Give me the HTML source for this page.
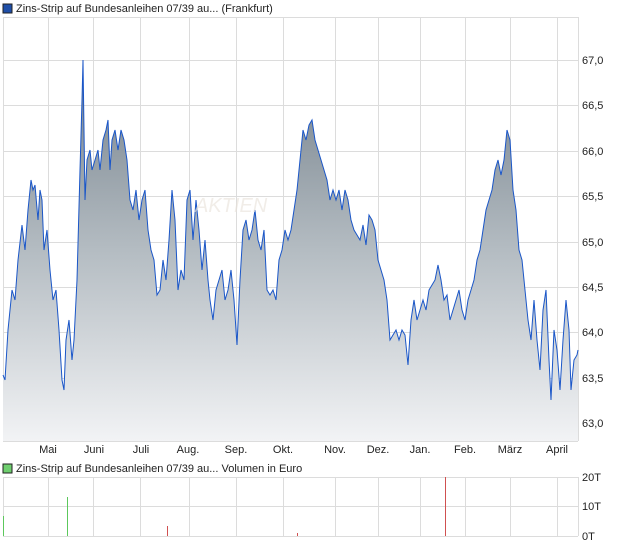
<!DOCTYPE html>
<html><head><meta charset="utf-8"><style>
html,body{margin:0;padding:0;background:#fff;}
body{width:620px;height:546px;overflow:hidden;font-family:"Liberation Sans",sans-serif;}
</style></head><body>
<svg width="620" height="546" viewBox="0 0 620 546" xmlns="http://www.w3.org/2000/svg" font-family="Liberation Sans, sans-serif" font-size="11">
<defs>
<linearGradient id="g" x1="0" y1="60" x2="0" y2="441" gradientUnits="userSpaceOnUse">
<stop offset="0" stop-color="#74808a"/><stop offset="0.5" stop-color="#b4bcc2"/><stop offset="1" stop-color="#f2f3f5"/>
</linearGradient>
</defs>
<rect x="3" y="4" width="9" height="9" fill="#1f4fa8" stroke="#222" stroke-width="1"/>
<text x="16" y="12" fill="#222">Zins-Strip auf Bundesanleihen 07/39 au... (Frankfurt)</text>
<g stroke="#dcdcdc" stroke-width="1">
<line x1="3" y1="17.5" x2="578" y2="17.5"/>
<line x1="3" y1="60.5" x2="578" y2="60.5"/><line x1="3" y1="105.5" x2="578" y2="105.5"/><line x1="3" y1="151.5" x2="578" y2="151.5"/><line x1="3" y1="196.5" x2="578" y2="196.5"/><line x1="3" y1="242.5" x2="578" y2="242.5"/><line x1="3" y1="287.5" x2="578" y2="287.5"/><line x1="3" y1="332.5" x2="578" y2="332.5"/><line x1="3" y1="378.5" x2="578" y2="378.5"/><line x1="3" y1="423.5" x2="578" y2="423.5"/>
<line x1="3.5" y1="17" x2="3.5" y2="441"/><line x1="48.5" y1="17" x2="48.5" y2="441"/><line x1="93.5" y1="17" x2="93.5" y2="441"/><line x1="140.5" y1="17" x2="140.5" y2="441"/><line x1="189.5" y1="17" x2="189.5" y2="441"/><line x1="236.5" y1="17" x2="236.5" y2="441"/><line x1="283.5" y1="17" x2="283.5" y2="441"/><line x1="335.5" y1="17" x2="335.5" y2="441"/><line x1="378.5" y1="17" x2="378.5" y2="441"/><line x1="420.5" y1="17" x2="420.5" y2="441"/><line x1="465.5" y1="17" x2="465.5" y2="441"/><line x1="510.5" y1="17" x2="510.5" y2="441"/><line x1="557.5" y1="17" x2="557.5" y2="441"/>
<line x1="578.5" y1="17" x2="578.5" y2="441"/><line x1="3" y1="441.5" x2="578" y2="441.5"/>
</g>
<polygon fill="url(#g)" points="3,441 3,375 5,380 8,330 12,290 15,300 18,260 22,225 25,250 28,210 31,180 33,190 35,185 38,220 40,190 42,200 44,250 47,230 50,270 53,300 56,290 59,330 62,380 64,390 66,340 69,320 72,360 74,340 77,280 80,170 82,100 83,60 84,130 85,200 87,160 90,150 92,170 95,160 98,150 100,170 103,140 106,130 108,120 110,170 112,140 115,130 118,150 121,130 124,140 127,160 130,200 133,210 136,190 139,220 142,200 145,190 148,230 151,250 154,260 157,295 160,290 163,260 166,280 169,240 172,190 175,220 178,290 181,270 184,280 187,200 190,190 193,240 196,200 199,230 202,270 205,240 208,280 210,300 213,320 216,290 219,280 222,270 225,300 228,290 231,270 234,300 237,345 240,280 243,230 246,220 249,240 252,230 255,210 258,240 261,250 264,230 267,290 270,295 273,290 276,300 279,260 282,250 285,230 288,240 291,230 294,210 297,190 300,160 303,130 306,140 309,125 312,120 315,140 318,150 321,160 324,170 327,180 330,200 333,190 336,200 339,190 342,210 345,190 348,200 351,220 354,230 357,235 360,240 363,225 366,245 369,215 372,220 375,230 378,260 381,270 384,280 387,300 390,340 393,335 396,330 399,340 402,330 405,335 408,365 411,320 414,300 417,320 420,310 423,300 426,310 429,290 432,285 435,280 438,265 441,280 444,300 447,295 450,320 453,310 456,300 459,290 462,310 465,320 468,300 471,290 474,280 477,260 480,250 483,230 486,210 489,200 492,190 495,170 498,160 501,175 504,160 507,130 510,140 513,190 516,210 519,250 522,260 525,290 528,320 531,340 534,300 537,340 540,370 543,310 546,290 549,360 551,400 554,330 557,350 560,390 563,340 566,300 569,330 571,390 574,360 577,355 578,350 578,441"/>
<polyline fill="none" stroke="#1a56c8" stroke-width="1" points="3,375 5,380 8,330 12,290 15,300 18,260 22,225 25,250 28,210 31,180 33,190 35,185 38,220 40,190 42,200 44,250 47,230 50,270 53,300 56,290 59,330 62,380 64,390 66,340 69,320 72,360 74,340 77,280 80,170 82,100 83,60 84,130 85,200 87,160 90,150 92,170 95,160 98,150 100,170 103,140 106,130 108,120 110,170 112,140 115,130 118,150 121,130 124,140 127,160 130,200 133,210 136,190 139,220 142,200 145,190 148,230 151,250 154,260 157,295 160,290 163,260 166,280 169,240 172,190 175,220 178,290 181,270 184,280 187,200 190,190 193,240 196,200 199,230 202,270 205,240 208,280 210,300 213,320 216,290 219,280 222,270 225,300 228,290 231,270 234,300 237,345 240,280 243,230 246,220 249,240 252,230 255,210 258,240 261,250 264,230 267,290 270,295 273,290 276,300 279,260 282,250 285,230 288,240 291,230 294,210 297,190 300,160 303,130 306,140 309,125 312,120 315,140 318,150 321,160 324,170 327,180 330,200 333,190 336,200 339,190 342,210 345,190 348,200 351,220 354,230 357,235 360,240 363,225 366,245 369,215 372,220 375,230 378,260 381,270 384,280 387,300 390,340 393,335 396,330 399,340 402,330 405,335 408,365 411,320 414,300 417,320 420,310 423,300 426,310 429,290 432,285 435,280 438,265 441,280 444,300 447,295 450,320 453,310 456,300 459,290 462,310 465,320 468,300 471,290 474,280 477,260 480,250 483,230 486,210 489,200 492,190 495,170 498,160 501,175 504,160 507,130 510,140 513,190 516,210 519,250 522,260 525,290 528,320 531,340 534,300 537,340 540,370 543,310 546,290 549,360 551,400 554,330 557,350 560,390 563,340 566,300 569,330 571,390 574,360 577,355 578,350"/>
<text x="195" y="212" fill="#e8e2da" font-size="20" font-style="italic" opacity="0.6">AKTIEN</text>
<g fill="#222">
<text x="582" y="64">67,0</text><text x="582" y="109">66,5</text><text x="582" y="155">66,0</text><text x="582" y="200">65,5</text><text x="582" y="246">65,0</text><text x="582" y="291">64,5</text><text x="582" y="336">64,0</text><text x="582" y="382">63,5</text><text x="582" y="427">63,0</text>
<text x="48" y="453" text-anchor="middle">Mai</text><text x="94" y="453" text-anchor="middle">Juni</text><text x="141" y="453" text-anchor="middle">Juli</text><text x="188" y="453" text-anchor="middle">Aug.</text><text x="236" y="453" text-anchor="middle">Sep.</text><text x="283" y="453" text-anchor="middle">Okt.</text><text x="335" y="453" text-anchor="middle">Nov.</text><text x="378" y="453" text-anchor="middle">Dez.</text><text x="420" y="453" text-anchor="middle">Jan.</text><text x="465" y="453" text-anchor="middle">Feb.</text><text x="510" y="453" text-anchor="middle">März</text><text x="557" y="453" text-anchor="middle">April</text>
</g>
<rect x="3" y="464" width="9" height="9" fill="#6fcf6f" stroke="#222" stroke-width="1"/>
<text x="16" y="472" fill="#222">Zins-Strip auf Bundesanleihen 07/39 au... Volumen in Euro</text>
<g stroke="#dcdcdc" stroke-width="1">
<line x1="3" y1="477.5" x2="578" y2="477.5"/><line x1="3" y1="506.5" x2="578" y2="506.5"/><line x1="3" y1="536.5" x2="578" y2="536.5"/>
<line x1="3.5" y1="477" x2="3.5" y2="536"/><line x1="48.5" y1="477" x2="48.5" y2="536"/><line x1="93.5" y1="477" x2="93.5" y2="536"/><line x1="140.5" y1="477" x2="140.5" y2="536"/><line x1="189.5" y1="477" x2="189.5" y2="536"/><line x1="236.5" y1="477" x2="236.5" y2="536"/><line x1="283.5" y1="477" x2="283.5" y2="536"/><line x1="335.5" y1="477" x2="335.5" y2="536"/><line x1="378.5" y1="477" x2="378.5" y2="536"/><line x1="420.5" y1="477" x2="420.5" y2="536"/><line x1="465.5" y1="477" x2="465.5" y2="536"/><line x1="510.5" y1="477" x2="510.5" y2="536"/><line x1="557.5" y1="477" x2="557.5" y2="536"/><line x1="578.5" y1="477" x2="578.5" y2="536"/>
</g>
<g stroke-width="1">
<line x1="3.5" y1="516" x2="3.5" y2="536" stroke="#5cc85c"/>
<line x1="67.5" y1="497" x2="67.5" y2="536" stroke="#5cc85c"/>
<line x1="167.5" y1="526" x2="167.5" y2="536" stroke="#d05050"/>
<line x1="297.5" y1="533" x2="297.5" y2="536" stroke="#d05050"/>
<line x1="445.5" y1="477" x2="445.5" y2="536" stroke="#d05050"/>
</g>
<g fill="#222"><text x="582" y="481">20T</text><text x="582" y="510">10T</text><text x="582" y="540">0T</text></g>
</svg>
</body></html>
